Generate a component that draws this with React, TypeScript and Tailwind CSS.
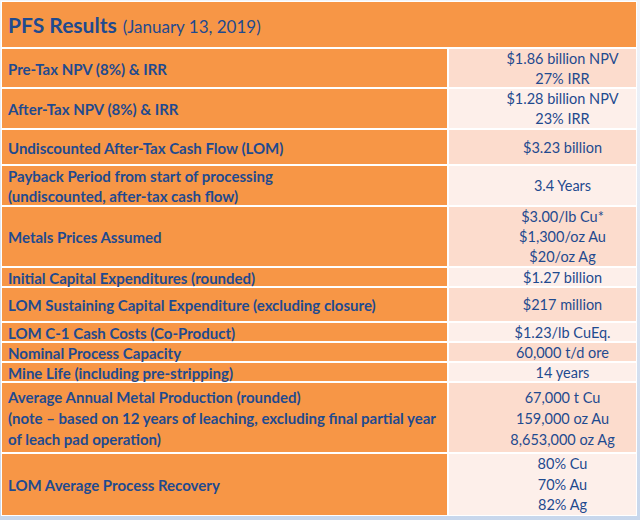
const rows: { label: string[]; value: string[]; h: string; lh: string; dark: boolean }[] = [
  { label: ["Pre-Tax NPV (8%) & IRR"], value: ["$1.86 billion NPV", "27% IRR"], h: "h-[38px]", lh: "leading-[20px]", dark: true },
  { label: ["After-Tax NPV (8%) & IRR"], value: ["$1.28 billion NPV", "23% IRR"], h: "h-[39px]", lh: "leading-[20px]", dark: false },
  { label: ["Undiscounted After-Tax Cash Flow (LOM)"], value: ["$3.23 billion"], h: "h-[34px]", lh: "leading-[20px]", dark: true },
  {
    label: ["Payback Period from start of processing", "(undiscounted, after-tax cash flow)"],
    value: ["3.4 Years"],
    h: "h-[39px]",
    lh: "leading-[20px]",
    dark: false,
  },
  {
    label: ["Metals Prices Assumed"],
    value: ["$3.00/lb Cu*", "$1,300/oz Au", "$20/oz Ag"],
    h: "h-[59px]",
    lh: "leading-[20px]",
    dark: true,
  },
  { label: ["Initial Capital Expenditures (rounded)"], value: ["$1.27 billion"], h: "h-[18px]", lh: "leading-[18px]", dark: false },
  {
    label: ["LOM Sustaining Capital Expenditure (excluding closure)"],
    value: ["$217 million"],
    h: "h-[33px]",
    lh: "leading-[20px]",
    dark: true,
  },
  { label: ["LOM C-1 Cash Costs (Co-Product)"], value: ["$1.23/lb CuEq."], h: "h-[18px]", lh: "leading-[18px]", dark: false },
  { label: ["Nominal Process Capacity"], value: ["60,000 t/d ore"], h: "h-[18px]", lh: "leading-[18px]", dark: true },
  { label: ["Mine Life (including pre-stripping)"], value: ["14 years"], h: "h-[18px]", lh: "leading-[18px]", dark: false },
  {
    label: [
      "Average Annual Metal Production (rounded)",
      "(note \u2013 based on 12 years of leaching, excluding final partial year",
      "of leach pad operation)",
    ],
    value: ["67,000 t Cu", "159,000 oz Au", "8,653,000 oz Ag"],
    h: "h-[69px]",
    lh: "leading-[21px]",
    dark: true,
  },
  {
    label: ["LOM Average Process Recovery"],
    value: ["80% Cu", "70% Au", "82% Ag"],
    h: "h-[61px]",
    lh: "leading-[20.5px]",
    dark: false,
  },
];

export default function App() {
  return (
    <div
      className="w-[640px] h-[520px] bg-gradient-to-b from-[#f2f5fa] to-[#c8d7ec] pl-[1px] pt-[1px] text-[#1f4a8f]"
      style={{ fontFamily: "Lato, 'Open Sans', sans-serif" }}
    >
      <div className="w-[636px] bg-white p-[1px] flex flex-col gap-[2px]">
        {/* Title */}
        <div className="h-[45px] shrink-0 bg-[#f79646] flex items-center pl-[6px] pt-[1px]">
          <span className="text-[21px] font-bold">PFS Results</span>
          <span className="text-[17px] ml-[6px] mt-[3px]">(January 13, 2019)</span>
        </div>

        {rows.map((r, i) => (
          <div key={i} className={`${r.h} shrink-0 flex gap-[2px]`}>
            <div
              className={`w-[445px] bg-[#f79646] flex flex-col justify-center pl-[6px] pt-[1px] text-[15px] font-bold whitespace-nowrap ${r.lh}`}
            >
              {r.label.map((l) => (
                <div key={l}>{l}</div>
              ))}
            </div>
            <div
              className={`flex-1 flex flex-col justify-center items-center pl-[40px] pt-[1px] text-[14.5px] whitespace-nowrap ${r.lh} ${
                r.dark ? "bg-[#fcdccd]" : "bg-[#fdefea]"
              }`}
            >
              {r.value.map((v) => (
                <div key={v}>{v}</div>
              ))}
            </div>
          </div>
        ))}
      </div>
    </div>
  );
}
